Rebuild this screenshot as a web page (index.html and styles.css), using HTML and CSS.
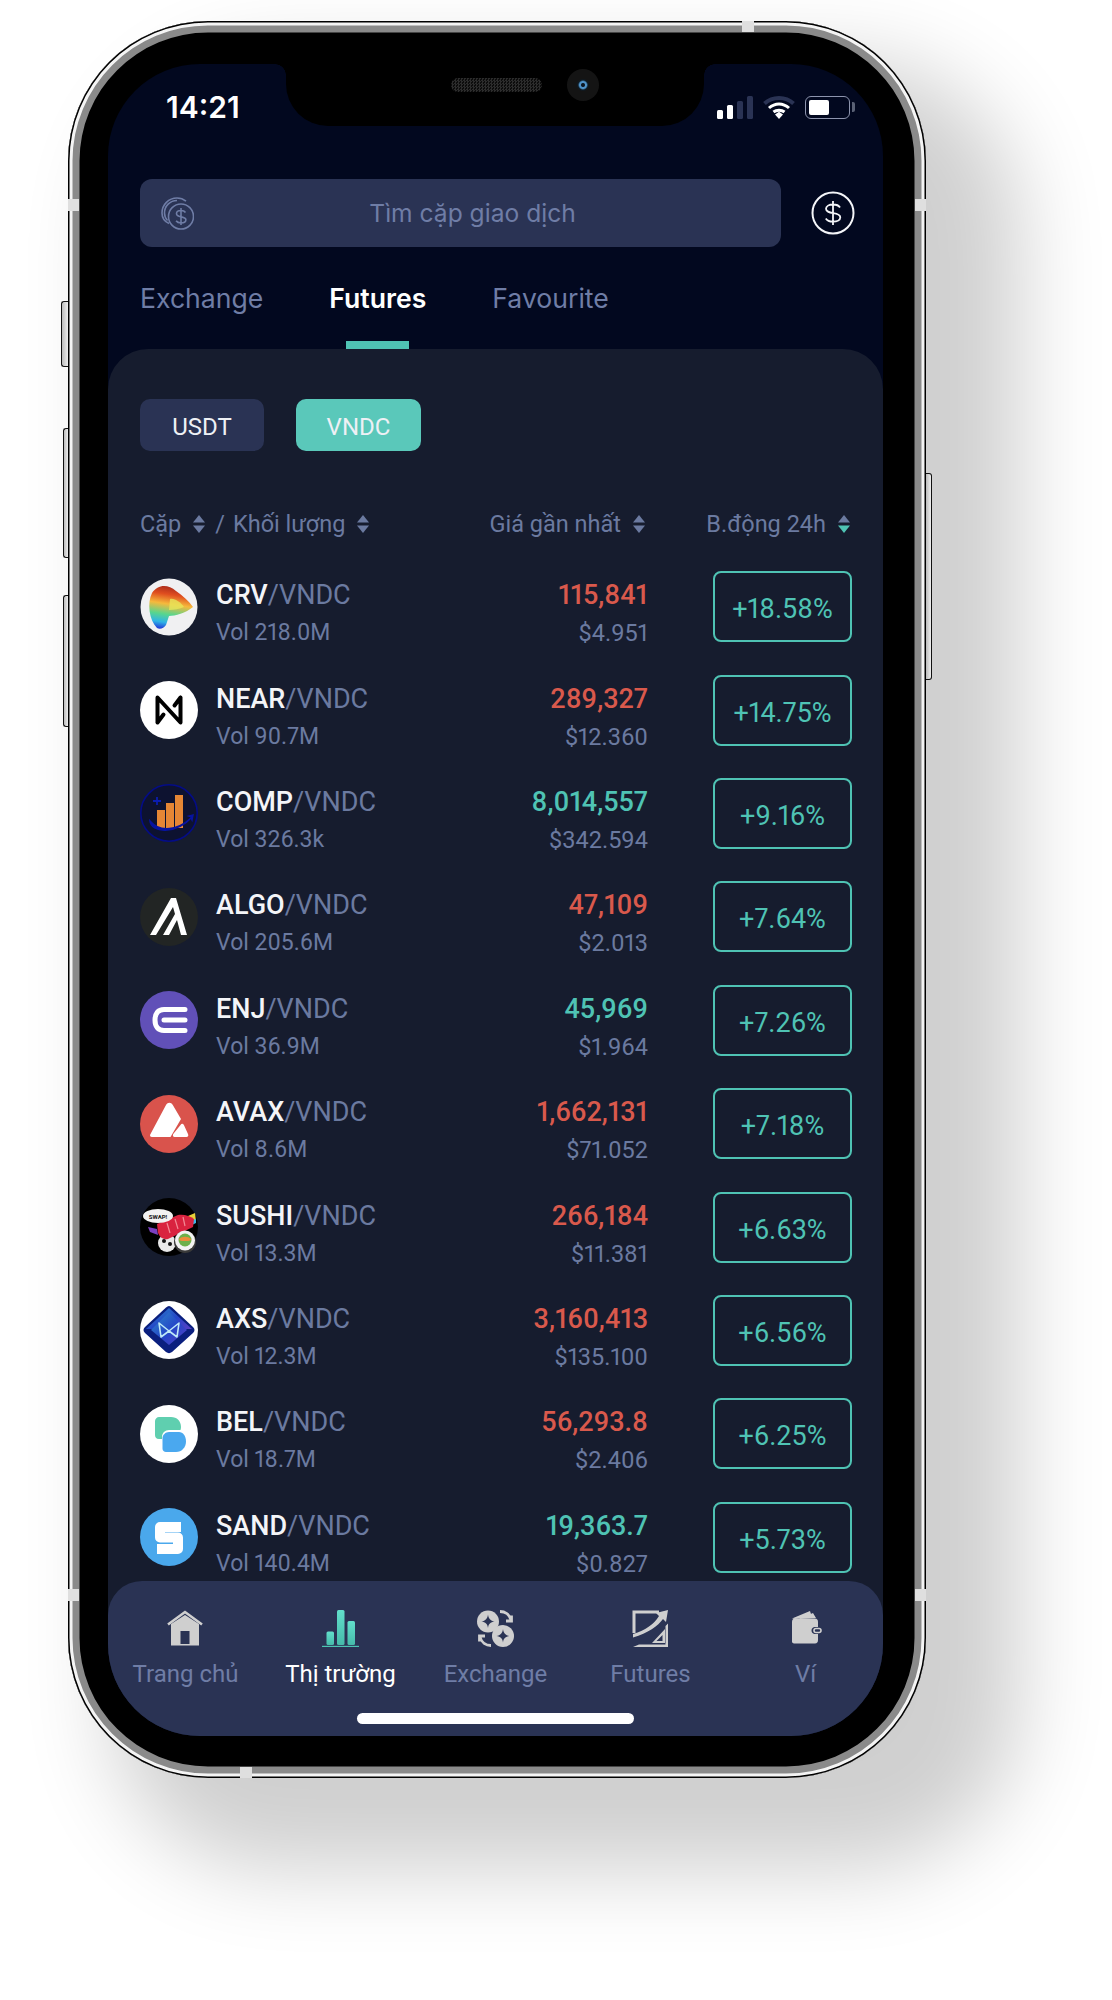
FILE: index.html
```html
<!DOCTYPE html>
<html lang="vi">
<head>
  <meta charset="UTF-8">
  <meta name="viewport" content="width=device-width, initial-scale=1.0">
  <title>Thị trường</title>
  <link rel="stylesheet" href="styles.css">
</head>
<body>
  <svg class="defs" width="0" height="0">
    <symbol id="sort" viewBox="0 0 12 18">
      <path d="M6 0 12 7.500H0Z" />
      <path d="M0 10.500H12L6 18Z" />
    </symbol>
    <linearGradient id="crv" x1="0.5" y1="0" x2="0.35" y2="1">
      <stop offset="0" stop-color="#a82a1c" />
      <stop offset="0.2" stop-color="#e04e1f" />
      <stop offset="0.42" stop-color="#f6b93c" />
      <stop offset="0.66" stop-color="#58d68d" />
      <stop offset="0.85" stop-color="#2fb4e6" />
      <stop offset="1" stop-color="#2340d8" />
    </linearGradient>
    <linearGradient id="bars" x1="0" y1="0" x2="0" y2="1">
      <stop offset="0" stop-color="#62dfcb" />
      <stop offset="1" stop-color="#46bbaa" />
    </linearGradient>
    <linearGradient id="axs" x1="0" y1="0" x2="1" y2="1">
      <stop offset="0" stop-color="#2f8ac9" />
      <stop offset="0.55" stop-color="#2446c8" />
      <stop offset="1" stop-color="#5a3fc4" />
    </linearGradient>
  </svg>

  <div class="phone">
    <span class="side-btn silent"></span>
    <span class="side-btn vol-up"></span>
    <span class="side-btn vol-down"></span>
    <span class="side-btn power"></span>
    <span class="band band-left"></span>
    <span class="band band-right"></span>
    <span class="band band-left-low"></span>
    <span class="band band-right-low"></span>
    <span class="band band-top"></span>
    <span class="band band-bottom"></span>

    <div class="screen">
      <div class="notch">
        <span class="speaker"></span>
        <span class="camera"></span>
      </div>

      <div class="status">
        <span class="time">14:21</span>
        <div class="status-icons">
          <svg width="36" height="23" viewBox="0 0 36 23">
            <rect x="0" y="14" width="6" height="9" rx="1.500" fill="#fff" />
            <rect x="10" y="9" width="6" height="14" rx="1.500" fill="#fff" />
            <rect x="20" y="5" width="6" height="18" rx="1.500" fill="#2a3354" />
            <rect x="30" y="0" width="6" height="23" rx="1.500" fill="#2a3354" />
          </svg>
          <svg width="32" height="24" viewBox="0 0 32 24">
            <path d="M1.500 8.500C9.500 1 22.500 1 30.500 8.500" fill="none" stroke="#2a3354" stroke-width="4" />
            <path d="M6 13C12 7.500 20 7.500 26 13" fill="none" stroke="#fff" stroke-width="3" />
            <path d="M10.500 17C13.500 14.500 18.500 14.500 21.500 17" fill="none" stroke="#fff" stroke-width="3" />
            <path d="M12 19.500 16 16.800 20 19.500 16 24Z" fill="#fff" />
          </svg>
          <div class="battery"><span class="battery-fill"></span></div>
        </div>
      </div>

      <div class="search-row">
        <div class="search">
          <svg class="search-icon" width="33" height="33" viewBox="0 0 33 33" fill="none" stroke="#6f7da6" stroke-width="1.600">
            <path d="M8 26.500C3.500 24.500 1 20.500 1 16 1 7.700 7.700 1 16 1c3.500 0 6.600 1.200 9 3.200" />
            <path d="M6.500 23.500C4.500 21.500 3.500 19 3.500 16 3.500 9 9 3.500 16 3.500" />
            <circle cx="20" cy="19.500" r="12.500" />
            <path d="M24.500 15.500c-.8-1.300-2.500-2-4.500-2-2.600 0-4.500 1.300-4.500 3.200 0 4.300 9.400 2 9.400 6.100 0 1.900-2 3.200-4.900 3.200-2.200 0-4-.8-4.900-2.200M20 11v17" />
          </svg>
          <span class="search-text">Tìm cặp giao dịch</span>
        </div>
        <svg class="dollar" width="44" height="44" viewBox="0 0 44 44" fill="none" stroke="#f4f5f8" stroke-width="2">
          <circle cx="22" cy="22" r="20.500" />
          <path d="M29 16.500c-1-1.800-3.500-3-7-3-4 0-7 1.700-7 4.300 0 6 14.300 2.600 14.300 8.400 0 2.700-3 4.500-7.300 4.500-3.500 0-6-1.200-7.200-3.200M22 10v24" stroke-width="1.800" />
        </svg>
      </div>

      <div class="tabs">
        <a class="tab">Exchange</a>
        <a class="tab active">Futures</a>
        <a class="tab">Favourite</a>
      </div>

      <div class="panel">
        <div class="chips">
          <button class="chip">USDT</button>
          <button class="chip chip-on">VNDC</button>
        </div>

        <div class="thead">
          <div class="th">
            <span>Cặp</span><svg class="sort"><use href="#sort" /></svg>
            <span class="th-slash">/</span>
            <span>Khối lượng</span><svg class="sort"><use href="#sort" /></svg>
          </div>
          <div class="th">
            <span>Giá gần nhất</span><svg class="sort"><use href="#sort" /></svg>
          </div>
          <div class="th th-change">
            <span>B.động 24h</span>
            <svg class="sort" viewBox="0 0 12 18">
              <path d="M6 0 12 7.500H0Z" />
              <path class="sort-on" d="M0 10.500H12L6 18Z" />
            </svg>
          </div>
        </div>

        <div class="list">
          <div class="row">
            <svg class="logo" viewBox="0 0 58 58">
              <circle cx="29" cy="29" r="28.500" fill="#f0f0f2" />
              <path d="M12 15C18 6 28 6 36 13c7 5 13 10 17 16-7 6-18 9-24 9l-3 9c-2 3-6 5-9 3C9 42 7 25 12 15Z" fill="url(#crv)" />
              <path d="M30 21c5-1 10 3 14 8-4 2-10 3-15 3Z" fill="#e7e65a" opacity="0.8" />
            </svg>
            <div class="coin">
              <div class="pair"><b>CRV</b>/VNDC</div>
              <div class="vol">Vol 218.0M</div>
            </div>
            <div class="price">
              <div class="last down">115,841</div>
              <div class="usd">$4.951</div>
            </div>
            <div class="change">+18.58%</div>
          </div>

          <div class="row">
            <svg class="logo" viewBox="0 0 58 58">
              <circle cx="29" cy="29" r="29" fill="#fff" />
              <path d="M17.500 41.500V16.500L40.500 41.500V16.500M17.500 41.500l6-8M40.500 16.500l-6 8" fill="none" stroke="#000" stroke-width="4" stroke-linejoin="round" stroke-linecap="round" />
            </svg>
            <div class="coin">
              <div class="pair"><b>NEAR</b>/VNDC</div>
              <div class="vol">Vol 90.7M</div>
            </div>
            <div class="price">
              <div class="last down">289,327</div>
              <div class="usd">$12.360</div>
            </div>
            <div class="change">+14.75%</div>
          </div>

          <div class="row">
            <svg class="logo" viewBox="0 0 58 58">
              <circle cx="29" cy="29" r="28.200" fill="#0d1230" stroke="#040c86" stroke-width="1.600" />
              <path d="M17 26h8v18h-8zM26 19h8v25h-8zM35 11h8v33h-8z" fill="#e58635" />
              <path d="M10 37c1 12 26 14 42-4l-3-1 4-1-1 5-1-2C38 46 20 49 10 37Z" fill="#0713a0" stroke="#0713a0" stroke-width="1.500" />
              <path d="M17 13v8M13 17h8" stroke="#0b1db0" stroke-width="1.800" />
            </svg>
            <div class="coin">
              <div class="pair"><b>COMP</b>/VNDC</div>
              <div class="vol">Vol 326.3k</div>
            </div>
            <div class="price">
              <div class="last up">8,014,557</div>
              <div class="usd">$342.594</div>
            </div>
            <div class="change">+9.16%</div>
          </div>

          <div class="row">
            <svg class="logo" viewBox="0 0 58 58">
              <circle cx="29" cy="29" r="29" fill="#222524" />
              <path d="M10 47 31 10h5l11 37h-6l-4-15-8 15h-6l12-21-2-7-17 28Z" fill="#fff" />
            </svg>
            <div class="coin">
              <div class="pair"><b>ALGO</b>/VNDC</div>
              <div class="vol">Vol 205.6M</div>
            </div>
            <div class="price">
              <div class="last down">47,109</div>
              <div class="usd">$2.013</div>
            </div>
            <div class="change">+7.64%</div>
          </div>

          <div class="row">
            <svg class="logo" viewBox="0 0 58 58">
              <circle cx="29" cy="29" r="29" fill="#6150b8" />
              <path d="M45 18.500H24c-6 0-9 4-9 10.500s3 10.500 9 10.500h21M24 29h21" fill="none" stroke="#fff" stroke-width="5" stroke-linecap="round" />
            </svg>
            <div class="coin">
              <div class="pair"><b>ENJ</b>/VNDC</div>
              <div class="vol">Vol 36.9M</div>
            </div>
            <div class="price">
              <div class="last up">45,969</div>
              <div class="usd">$1.964</div>
            </div>
            <div class="change">+7.26%</div>
          </div>

          <div class="row">
            <svg class="logo" viewBox="0 0 58 58">
              <circle cx="29" cy="29" r="29" fill="#d9534c" />
              <path d="M26 10c1.800-3 5-3 6.800 0L41 24 30.500 42H12c-2 0-2.500-1.500-1.500-3Z" fill="#fff" />
              <path d="M40.500 30c1-1.600 2.400-1.600 3.400 0L48 39c.8 1.600 0 3-1.500 3h-12c-1.500 0-2-1.400-1.300-3Z" fill="#fff" />
            </svg>
            <div class="coin">
              <div class="pair"><b>AVAX</b>/VNDC</div>
              <div class="vol">Vol 8.6M</div>
            </div>
            <div class="price">
              <div class="last down">1,662,131</div>
              <div class="usd">$71.052</div>
            </div>
            <div class="change">+7.18%</div>
          </div>

          <div class="row">
            <svg class="logo" viewBox="0 0 58 58">
              <circle cx="29" cy="29" r="29" fill="#000" />
              <path d="M8 29l9 2 1 6-8-3Z" fill="#7a3fc0" />
              <path d="M48 18l7-3 1 8-7 3Z" fill="#e8d13a" />
              <path d="M50 23l6-2v4l-6 3Z" fill="#3fb6e8" />
              <circle cx="27" cy="45" r="9" fill="#e8e8e8" />
              <circle cx="24" cy="43" r="2" fill="#111" />
              <circle cx="30" cy="46" r="2" fill="#111" />
              <path d="M17 26 38 17c6-1 12 1 16 4l-1 8-25 12c-4 1-8-1-10-6Z" fill="#d9233f" />
              <path d="M27 25l3 10M35 21l3 10M43 19l2 9" stroke="#f28a95" stroke-width="1.200" />
              <ellipse cx="18" cy="18" rx="15" ry="7" fill="#f2f2f2" />
              <text class="swap" x="18" y="20.500" text-anchor="middle">SWAP!</text>
              <circle cx="45" cy="44" r="11" fill="#3a3a3a" />
              <circle cx="45" cy="42.500" r="10" fill="#f2f2f2" />
              <circle cx="45" cy="42" r="6.500" fill="#6cb04a" />
              <path d="M39 41c3-3 9-3 12 0 0 2-3 2-6 2s-6 0-6-2Z" fill="#ec8c3b" />
            </svg>
            <div class="coin">
              <div class="pair"><b>SUSHI</b>/VNDC</div>
              <div class="vol">Vol 13.3M</div>
            </div>
            <div class="price">
              <div class="last down">266,184</div>
              <div class="usd">$11.381</div>
            </div>
            <div class="change">+6.63%</div>
          </div>

          <div class="row">
            <svg class="logo" viewBox="0 0 58 58">
              <circle cx="29" cy="29" r="29" fill="#fff" />
              <path d="M29 5c1 0 2 .5 3 1.500L53 26c2 2 2 4 0 6L32 51c-2 1.500-4 1.500-6 0L5 32c-2-2-2-4 0-6L26 6.500C27 5.500 28 5 29 5Z" fill="#0a1f7e" />
              <path d="M29 7 52 28H6Z" fill="url(#axs)" />
              <path d="M29 11 47 29 29 44 11 29Z" fill="url(#axs)" />
              <path d="M19 22l10 8 10-8-2 14-8-6-8 6Z" fill="none" stroke="#bfe9f7" stroke-width="1.600" stroke-linejoin="round" />
            </svg>
            <div class="coin">
              <div class="pair"><b>AXS</b>/VNDC</div>
              <div class="vol">Vol 12.3M</div>
            </div>
            <div class="price">
              <div class="last down">3,160,413</div>
              <div class="usd">$135.100</div>
            </div>
            <div class="change">+6.56%</div>
          </div>

          <div class="row">
            <svg class="logo" viewBox="0 0 58 58">
              <circle cx="29" cy="29" r="29" fill="#fff" />
              <path d="M19 12H31c6 0 10 4 10 10 0 1-.2 2-.5 3H29c-4 0-7 3-7 7v2h-3c-3 0-4-2-4-4V16c0-2 2-4 4-4Z" fill="#5fcfaf" />
              <path d="M29 27H39c4 0 7 4 7 9.500S42 47 36 47H26c-2 0-3.500-1.500-3.500-3.500V33c0-3 3-6 6.500-6Z" fill="#4aa8ef" />
            </svg>
            <div class="coin">
              <div class="pair"><b>BEL</b>/VNDC</div>
              <div class="vol">Vol 18.7M</div>
            </div>
            <div class="price">
              <div class="last down">56,293.8</div>
              <div class="usd">$2.406</div>
            </div>
            <div class="change">+6.25%</div>
          </div>

          <div class="row">
            <svg class="logo" viewBox="0 0 58 58">
              <circle cx="29" cy="29" r="29" fill="#4aa8ec" />
              <path d="M41 19H20v10.500h18V41H17" fill="none" stroke="#fff" stroke-width="10" stroke-linejoin="round" />
            </svg>
            <div class="coin">
              <div class="pair"><b>SAND</b>/VNDC</div>
              <div class="vol">Vol 140.4M</div>
            </div>
            <div class="price">
              <div class="last up">19,363.7</div>
              <div class="usd">$0.827</div>
            </div>
            <div class="change">+5.73%</div>
          </div>
        </div>

        <nav class="nav">
          <div class="nav-items">
            <a class="nav-item">
              <svg class="nav-icon" viewBox="0 0 37 37">
                <path d="M1 14.500 18 2l17 12.500" fill="none" stroke="#cfcfcf" stroke-width="2.600" />
                <path fill-rule="evenodd" d="M4 35.500V14L18 5l14 9v21.500ZM13.500 21v13h9V21Z" fill="#cfcfcf" />
              </svg>
              <span>Trang chủ</span>
            </a>
            <a class="nav-item active">
              <svg class="nav-icon" viewBox="0 0 37 37">
                <rect x="4.500" y="21.500" width="7.500" height="13.500" rx="1.500" fill="url(#bars)" />
                <rect x="15" y="0" width="7.500" height="35" rx="1.500" fill="url(#bars)" />
                <rect x="25.500" y="11" width="7.500" height="24" rx="1.500" fill="url(#bars)" />
                <rect x="0" y="35.800" width="37" height="1.200" fill="#4cc4b2" />
              </svg>
              <span>Thị trường</span>
            </a>
            <a class="nav-item">
              <svg class="nav-icon" viewBox="0 0 37 37">
                <circle cx="11" cy="11.500" r="11" fill="#cfcfcf" />
                <circle cx="26" cy="26" r="11" fill="#cfcfcf" />
                <path d="M11 4.500c.5 4 2.500 6.500 6.500 7-4 .5-6 2.500-6.500 6.500-.5-4-2.500-6-6.500-6.500 4-.5 6-3 6.500-7ZM26 19c.5 4 2.500 6.500 6.500 7-4 .5-6 2.500-6.500 6.500-.5-4-2.500-6-6.500-6.500 4-.5 6-3 6.500-7Z" fill="#2a3354" />
                <path d="M23 1.500c5 0 9.500 3 11 8.500M34.500 5.500V11h-5.500M14 35.500c-5 0-9.500-3-11-8.500M2.500 31.500V26H8" fill="none" stroke="#cfcfcf" stroke-width="2.800" />
              </svg>
              <span>Exchange</span>
            </a>
            <a class="nav-item">
              <svg class="nav-icon" viewBox="0 0 37 37">
                <path d="M27 2H2v21" fill="none" stroke="#cfcfcf" stroke-width="3" />
                <path d="M36 0 24 3l3 3C22 14 14 20 1 24v3.500C16 23 26 16 31 9l3 3Z" fill="#cfcfcf" />
                <path d="M36 13.500V37H1l6-2.500H33.500V16Z" fill="#cfcfcf" />
                <path d="M33 19 20 33h13Zm-2.500 6-6 6h6Z" fill="#cfcfcf" fill-rule="evenodd" />
              </svg>
              <span>Futures</span>
            </a>
            <a class="nav-item">
              <svg class="nav-icon" viewBox="0 0 37 37">
                <path d="M5 8.500 23 1l2 6-17 2ZM12 9 26 3l3 5Z" fill="#cfcfcf" />
                <path fill-rule="evenodd" d="M5 12c0-2 1-3.500 3-3.500h20c2 0 3 1.500 3 3.500v5h-3c-2 0-3.500 1.500-3.500 3.500S26 24 28 24h3v6c0 2-1 3.500-3 3.500H7c-1 0-2-1-2-2Z" fill="#cfcfcf" />
                <rect x="27" y="18.500" width="7" height="4" rx="2" fill="none" stroke="#cfcfcf" stroke-width="1.600" />
              </svg>
              <span>Ví</span>
            </a>
          </div>
          <span class="home-bar"></span>
        </nav>
      </div>
    </div>
  </div>
</body>
</html>
```

FILE: styles.css
```css
* {
  box-sizing: border-box;
}

body {
  height: 2000px;
  margin: 0;
  padding: 21px 0 0 68px;
  background: #fff;
  font-family: Roboto, Arial, sans-serif;
  font-variant-numeric: proportional-nums;
  overflow: hidden;
}

.defs {
  position: absolute;
}

/* phone body */
.phone {
  position: relative;
  width: 858px;
  height: 1757px;
  padding: 43px 43px 42px 40px;
  background: #000;
  border-radius: 140px;
  box-shadow:
    inset 0 0 0 1.5px #000,
    inset 0 0 0 4.5px #f4f4f4,
    inset 0 0 0 11.5px #8a8a8a,
    68px 66px 85px 26px rgba(0,0,0,0.19);
}

.side-btn {
  position: absolute;
  width: 7px;
  background: linear-gradient(90deg, #bbb, #eee);
  border: 1.5px solid #111;
  border-right: none;
  border-radius: 3px 0 0 3px;
}

.silent { left: -7px; top: 280px; height: 66px; }
.vol-up { left: -5px; width: 5px; top: 407px; height: 130px; }
.vol-down { left: -5px; width: 5px; top: 574px; height: 132px; }
.power {
  left: 858px;
  width: 6px;
  top: 452px;
  height: 207px;
  border: 1.5px solid #111;
  border-left: none;
  border-radius: 0 3px 3px 0;
}

.band {
  position: absolute;
  background: #dfdfdf;
}

.band-left, .band-left-low { left: 0; width: 11px; height: 12px; }
.band-right, .band-right-low { right: 0; width: 11px; height: 12px; }
.band-left, .band-right { top: 178px; }
.band-left-low, .band-right-low { top: 1568px; }
.band-top { top: 0; left: 674px; width: 12px; height: 11px; }
.band-bottom { bottom: 0; left: 172px; width: 12px; height: 11px; }

/* screen */
.screen {
  position: relative;
  display: flex;
  flex-direction: column;
  height: 100%;
  background: #02081f;
  border-radius: 92px;
  overflow: hidden;
}

.notch {
  position: absolute;
  top: 0;
  left: 178px;
  width: 418px;
  height: 62px;
  display: flex;
  align-items: center;
  gap: 25px;
  padding: 0 0 20px 165px;
  background: #000;
  border-radius: 0 0 42px 42px;
}

.notch::before,
.notch::after {
  content: "";
  position: absolute;
  top: 0;
  width: 11px;
  height: 11px;
}

.notch::before {
  left: -11px;
  background: radial-gradient(circle at 0 100%, transparent 10.5px, #000 11px);
}

.notch::after {
  right: -11px;
  background: radial-gradient(circle at 100% 100%, transparent 10.5px, #000 11px);
}

.speaker {
  width: 91px;
  height: 14px;
  border-radius: 7px;
  background: repeating-conic-gradient(#2c2c2c 0 25%, #0c0c0c 0 50%) 0 0 / 3px 3px;
}

.camera {
  width: 32px;
  height: 32px;
  border-radius: 50%;
  background: radial-gradient(circle, #0b1622 0 1.5px, #4f93c9 2.5px 3.5px, #0d1a24 5px, #141414 6.5px);
}

.status {
  display: flex;
  justify-content: space-between;
  align-items: center;
  flex: none;
  height: 115px;
  padding: 0 33px 29px 58px;
}

.time {
  color: #fff;
  font-family: Inter, sans-serif;
  font-size: 30px;
  font-weight: 600;
}

.status-icons {
  display: flex;
  align-items: center;
  gap: 10px;
}

.battery {
  position: relative;
  width: 45px;
  height: 23px;
  padding: 3px;
  border: 1.5px solid #8d94ad;
  border-radius: 6px;
}

.battery::after {
  content: "";
  position: absolute;
  top: 5px;
  right: -5.5px;
  width: 3px;
  height: 10px;
  background: #5a6175;
  border-radius: 0 2px 2px 0;
}

.battery-fill {
  display: block;
  width: 20px;
  height: 100%;
  background: #fff;
  border-radius: 2px;
}

.search-row {
  display: flex;
  align-items: center;
  flex: none;
  height: 68px;
  padding-left: 32px;
}

.search {
  position: relative;
  display: flex;
  align-items: center;
  justify-content: center;
  width: 641px;
  height: 68px;
  padding-left: 24px;
  background: #2a3354;
  border-radius: 12px;
}

.search-icon {
  position: absolute;
  left: 21px;
  top: 18px;
}

.search-text {
  color: #6f7da6;
  font-family: Inter, sans-serif;
  font-size: 24.6px;
}

.dollar {
  margin-left: 30px;
}

.tabs {
  display: flex;
  flex: none;
  gap: 66px;
  height: 102px;
  padding: 33px 0 0 32px;
}

.tab {
  display: flex;
  flex-direction: column;
  align-items: center;
  color: #6f7da6;
  font-family: Inter, sans-serif;
  font-size: 26.6px;
  line-height: 36px;
}

.tab.active {
  color: #fff;
  font-weight: 600;
}

.tab.active::after {
  content: "";
  width: 63px;
  height: 8px;
  margin-top: 25px;
  background: #4fc3b4;
}

/* market panel */
.panel {
  display: flex;
  flex-direction: column;
  flex: 1;
  min-height: 0;
  background: #161c2e;
  border-radius: 40px 40px 0 0;
  overflow: hidden;
}

.chips {
  display: flex;
  flex: none;
  gap: 32px;
  padding: 50px 32px 0;
}

.chip {
  width: 124px;
  height: 52px;
  border: none;
  border-radius: 10px;
  padding: 3px 0 0;
  background: #2a3354;
  color: #eef0f5;
  font-family: Roboto, sans-serif;
  font-size: 24px;
}

.chip-on {
  width: 125px;
  background: #5ac8ba;
}

.thead {
  display: grid;
  grid-template-columns: 1fr auto 139px;
  flex: none;
  gap: 68px;
  height: 30px;
  margin: 58px 31px 0 32px;
  color: #6b7aa0;
  font-size: 23.5px;
}

.th {
  display: flex;
  align-items: center;
  justify-content: flex-end;
  gap: 12px;
  white-space: nowrap;
}

.th:first-child {
  justify-content: flex-start;
}

.th-slash {
  margin: 0 -4px 0 -2px;
}

.th-change {
  padding-right: 2px;
}

.sort {
  flex: none;
  width: 12px;
  height: 18px;
  fill: #6b7aa0;
}

.sort-on {
  fill: #4fc3b4;
}

.list {
  flex: 1;
  min-height: 0;
  margin-top: 16px;
  padding: 0 31px 0 32px;
  overflow: hidden;
}

.row {
  display: flex;
  align-items: center;
  height: 103.4px;
}

.logo {
  flex: none;
  width: 58px;
  height: 58px;
}

.swap {
  font-family: Roboto, sans-serif;
  font-size: 6px;
  font-weight: 700;
  fill: #111;
}

.coin {
  flex: 1;
  margin-left: 18px;
  padding-top: 14px;
}

.pair {
  color: #6b7aa0;
  font-size: 27px;
  line-height: 36px;
}

.pair b {
  color: #f4f5f8;
  font-weight: 500;
}

.vol {
  margin-top: 3px;
  color: #6b7aa0;
  font-size: 23px;
  line-height: 34px;
}

.price {
  padding-top: 14px;
  text-align: right;
}

.last {
  font-size: 27px;
  font-weight: 500;
  line-height: 36px;
}

.up {
  color: #4fc3b4;
}

.down {
  color: #d9594c;
}

.usd {
  margin-top: 3px;
  color: #6b7aa0;
  font-size: 23.5px;
  line-height: 34px;
}

.change {
  flex: none;
  display: flex;
  align-items: center;
  justify-content: center;
  width: 139px;
  height: 71px;
  margin-left: 65px;
  padding-top: 5px;
  border: 2px solid #4fc3b4;
  border-radius: 8px;
  color: #4fc3b4;
  font-size: 27px;
}

/* bottom nav */
.nav {
  display: flex;
  flex-direction: column;
  flex: none;
  height: 155px;
  padding-top: 29px;
  background: #2a3354;
  border-radius: 34px 34px 0 0;
}

.nav-items {
  display: grid;
  grid-template-columns: repeat(5, 1fr);
}

.nav-item {
  display: flex;
  flex-direction: column;
  align-items: center;
  color: #6f7da6;
  font-size: 24px;
  line-height: 30px;
}

.nav-item.active {
  color: #fff;
}

.nav-icon {
  width: 37px;
  height: 37px;
  margin-bottom: 12px;
}

.home-bar {
  width: 277px;
  height: 11px;
  margin: 24px auto 0;
  background: #fff;
  border-radius: 6px;
}
```
